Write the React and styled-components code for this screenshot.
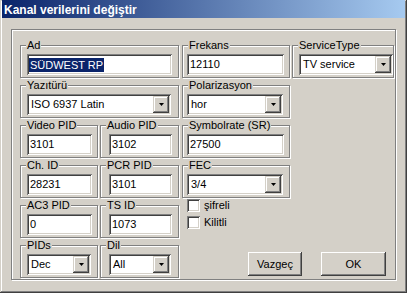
import React from 'react';
import styled, { createGlobalStyle } from 'styled-components';

const GlobalStyle = createGlobalStyle`
  html, body {
    margin: 0;
    padding: 0;
    background: #d4d0c8;
  }
  * {
    box-sizing: border-box;
  }
`;

const Window = styled.div`
  width: 407px;
  height: 293px;
  padding: 0 2px 2px 2px;
  background: #d4d0c8;
  font-family: "Liberation Sans", Arial, sans-serif;
  font-size: 11px;
  color: #000;
  box-shadow: inset -1px -1px #404040, inset 1px 1px #d4d0c8,
    inset -2px -2px #808080, inset 2px 2px #ffffff;
  overflow: hidden;
`;

const TitleBar = styled.div`
  height: 18px;
  padding: 3px 0 0 2px;
  background: linear-gradient(to right, #0a246a, #a6caf0);
  color: #fff;
  font-weight: bold;
  font-size: 12px;
  line-height: 14px;
  white-space: nowrap;
`;

const Panel = styled.div`
  width: 385px;
  height: 251px;
  margin: 11px 0 0 9px;
  padding: 9px 0 0 8px;
  border: 1px solid #808080;
  box-shadow: inset 1px 1px #fff, 1px 1px #fff;
  display: grid;
  grid-template-columns: 80px 82px 110px 102px;
  grid-auto-rows: 40px;
`;

const Group = styled.div`
  position: relative;
  padding-top: 6px;
  grid-column: ${(p) => p.$col || 'auto'};
`;

const Legend = styled.span`
  position: absolute;
  top: 0;
  left: 6px;
  padding: 0 1px;
  line-height: 13px;
  background: #d4d0c8;
  white-space: nowrap;
`;

const Frame = styled.div`
  width: ${(p) => p.$w}px;
  height: 33px;
  padding: 8px 0 0 ${(p) => p.$inset}px;
  border: 1px solid #808080;
  box-shadow: inset 1px 1px #fff, 1px 1px #fff;
`;

const sunken = `
  box-shadow: inset 1px 1px #808080, inset -1px -1px #fff,
    inset 2px 2px #404040, inset -2px -2px #d4d0c8;
`;

const TextBox = styled.div`
  width: ${(p) => p.$w}px;
  height: 21px;
  padding: 2px 2px 2px 3px;
  background: #fff;
  ${sunken}
  display: flex;
  align-items: center;
  line-height: 17px;
  white-space: nowrap;
`;

const Selected = styled.span`
  display: inline-block;
  margin-left: -1px;
  padding: 0 1px;
  line-height: 14px;
  background: #0a246a;
  color: #fff;
`;

const ComboBox = styled.div`
  width: ${(p) => p.$w}px;
  height: 21px;
  padding: 2px;
  background: #fff;
  ${sunken}
  display: flex;
  align-items: stretch;
`;

const ComboValue = styled.div`
  flex: 1;
  padding-left: 2px;
  line-height: 17px;
  white-space: nowrap;
  overflow: hidden;
`;

const DropButton = styled.div`
  width: 16px;
  background: #d4d0c8;
  box-shadow: inset -1px -1px #404040, inset 1px 1px #d4d0c8,
    inset -2px -2px #808080, inset 2px 2px #fff;
  display: flex;
  align-items: center;
  justify-content: center;
`;

const Checks = styled.div`
  grid-column: 3 / 5;
  padding-left: 5px;
  display: flex;
  flex-direction: column;
  gap: 4px;
`;

const CheckRow = styled.label`
  display: flex;
  align-items: center;
  height: 13px;
  gap: 4px;
  line-height: 13px;
`;

const CheckBox = styled.span`
  width: 13px;
  height: 13px;
  background: #fff;
  ${sunken}
`;

const Buttons = styled.div`
  grid-column: 3 / 5;
  padding: 13px 8px 0 0;
  display: flex;
  justify-content: flex-end;
  align-items: flex-start;
  gap: 19px;
`;

const Button = styled.button`
  width: ${(p) => p.$w}px;
  height: 24px;
  padding: 0;
  border: 0;
  background: #d4d0c8;
  font-family: inherit;
  font-size: 11px;
  color: #000;
  box-shadow: inset -1px -1px #404040, inset 1px 1px #fff,
    inset -2px -2px #808080, inset 2px 2px #d4d0c8;
`;

const Arrow = () => (
  <svg width="5" height="3" viewBox="0 0 5 3">
    <polygon points="0,0 5,0 2.5,3" fill="#000" />
  </svg>
);

function Field({ label, col, w, inset, children }) {
  return (
    <Group $col={col}>
      <Frame $w={w} $inset={inset}>{children}</Frame>
      <Legend>{label}</Legend>
    </Group>
  );
}

function Combo({ w, value }) {
  return (
    <ComboBox $w={w}>
      <ComboValue>{value}</ComboValue>
      <DropButton><Arrow /></DropButton>
    </ComboBox>
  );
}

export default function App() {
  return (
    <Window>
      <GlobalStyle />
      <TitleBar>Kanal verilerini değiştir</TitleBar>
      <Panel>
        <Field label="Ad" col="1 / 3" w={159} inset={6}>
          <TextBox $w={145}><Selected>SÜDWEST RP</Selected></TextBox>
        </Field>
        <Field label="Frekans" w={108} inset={4}>
          <TextBox $w={97}>12110</TextBox>
        </Field>
        <Field label="ServiceType" w={102} inset={6}>
          <Combo w={94} value="TV service" />
        </Field>

        <Field label="Yazıtürü" col="1 / 3" w={159} inset={6}>
          <Combo w={144} value="ISO 6937 Latin" />
        </Field>
        <Field label="Polarizasyon" col="3 / 5" w={108} inset={4}>
          <Combo w={96} value="hor" />
        </Field>

        <Field label="Video PID" w={78} inset={6}>
          <TextBox $w={65}>3101</TextBox>
        </Field>
        <Field label="Audio PID" w={79} inset={8}>
          <TextBox $w={63}>3102</TextBox>
        </Field>
        <Field label="Symbolrate (SR)" col="3 / 5" w={108} inset={4}>
          <TextBox $w={97}>27500</TextBox>
        </Field>

        <Field label="Ch. ID" w={78} inset={6}>
          <TextBox $w={65}>28231</TextBox>
        </Field>
        <Field label="PCR PID" w={79} inset={8}>
          <TextBox $w={63}>3101</TextBox>
        </Field>
        <Field label="FEC" col="3 / 5" w={108} inset={4}>
          <Combo w={96} value="3/4" />
        </Field>

        <Field label="AC3 PID" w={78} inset={6}>
          <TextBox $w={65}>0</TextBox>
        </Field>
        <Field label="TS ID" w={79} inset={8}>
          <TextBox $w={63}>1073</TextBox>
        </Field>
        <Checks>
          <CheckRow><CheckBox />şifreli</CheckRow>
          <CheckRow><CheckBox />Kilitli</CheckRow>
        </Checks>

        <Field label="PIDs" w={78} inset={6}>
          <Combo w={64} value="Dec" />
        </Field>
        <Field label="Dil" w={79} inset={8}>
          <Combo w={62} value="All" />
        </Field>
        <Buttons>
          <Button $w={54}>Vazgeç</Button>
          <Button $w={65}>OK</Button>
        </Buttons>
      </Panel>
    </Window>
  );
}
